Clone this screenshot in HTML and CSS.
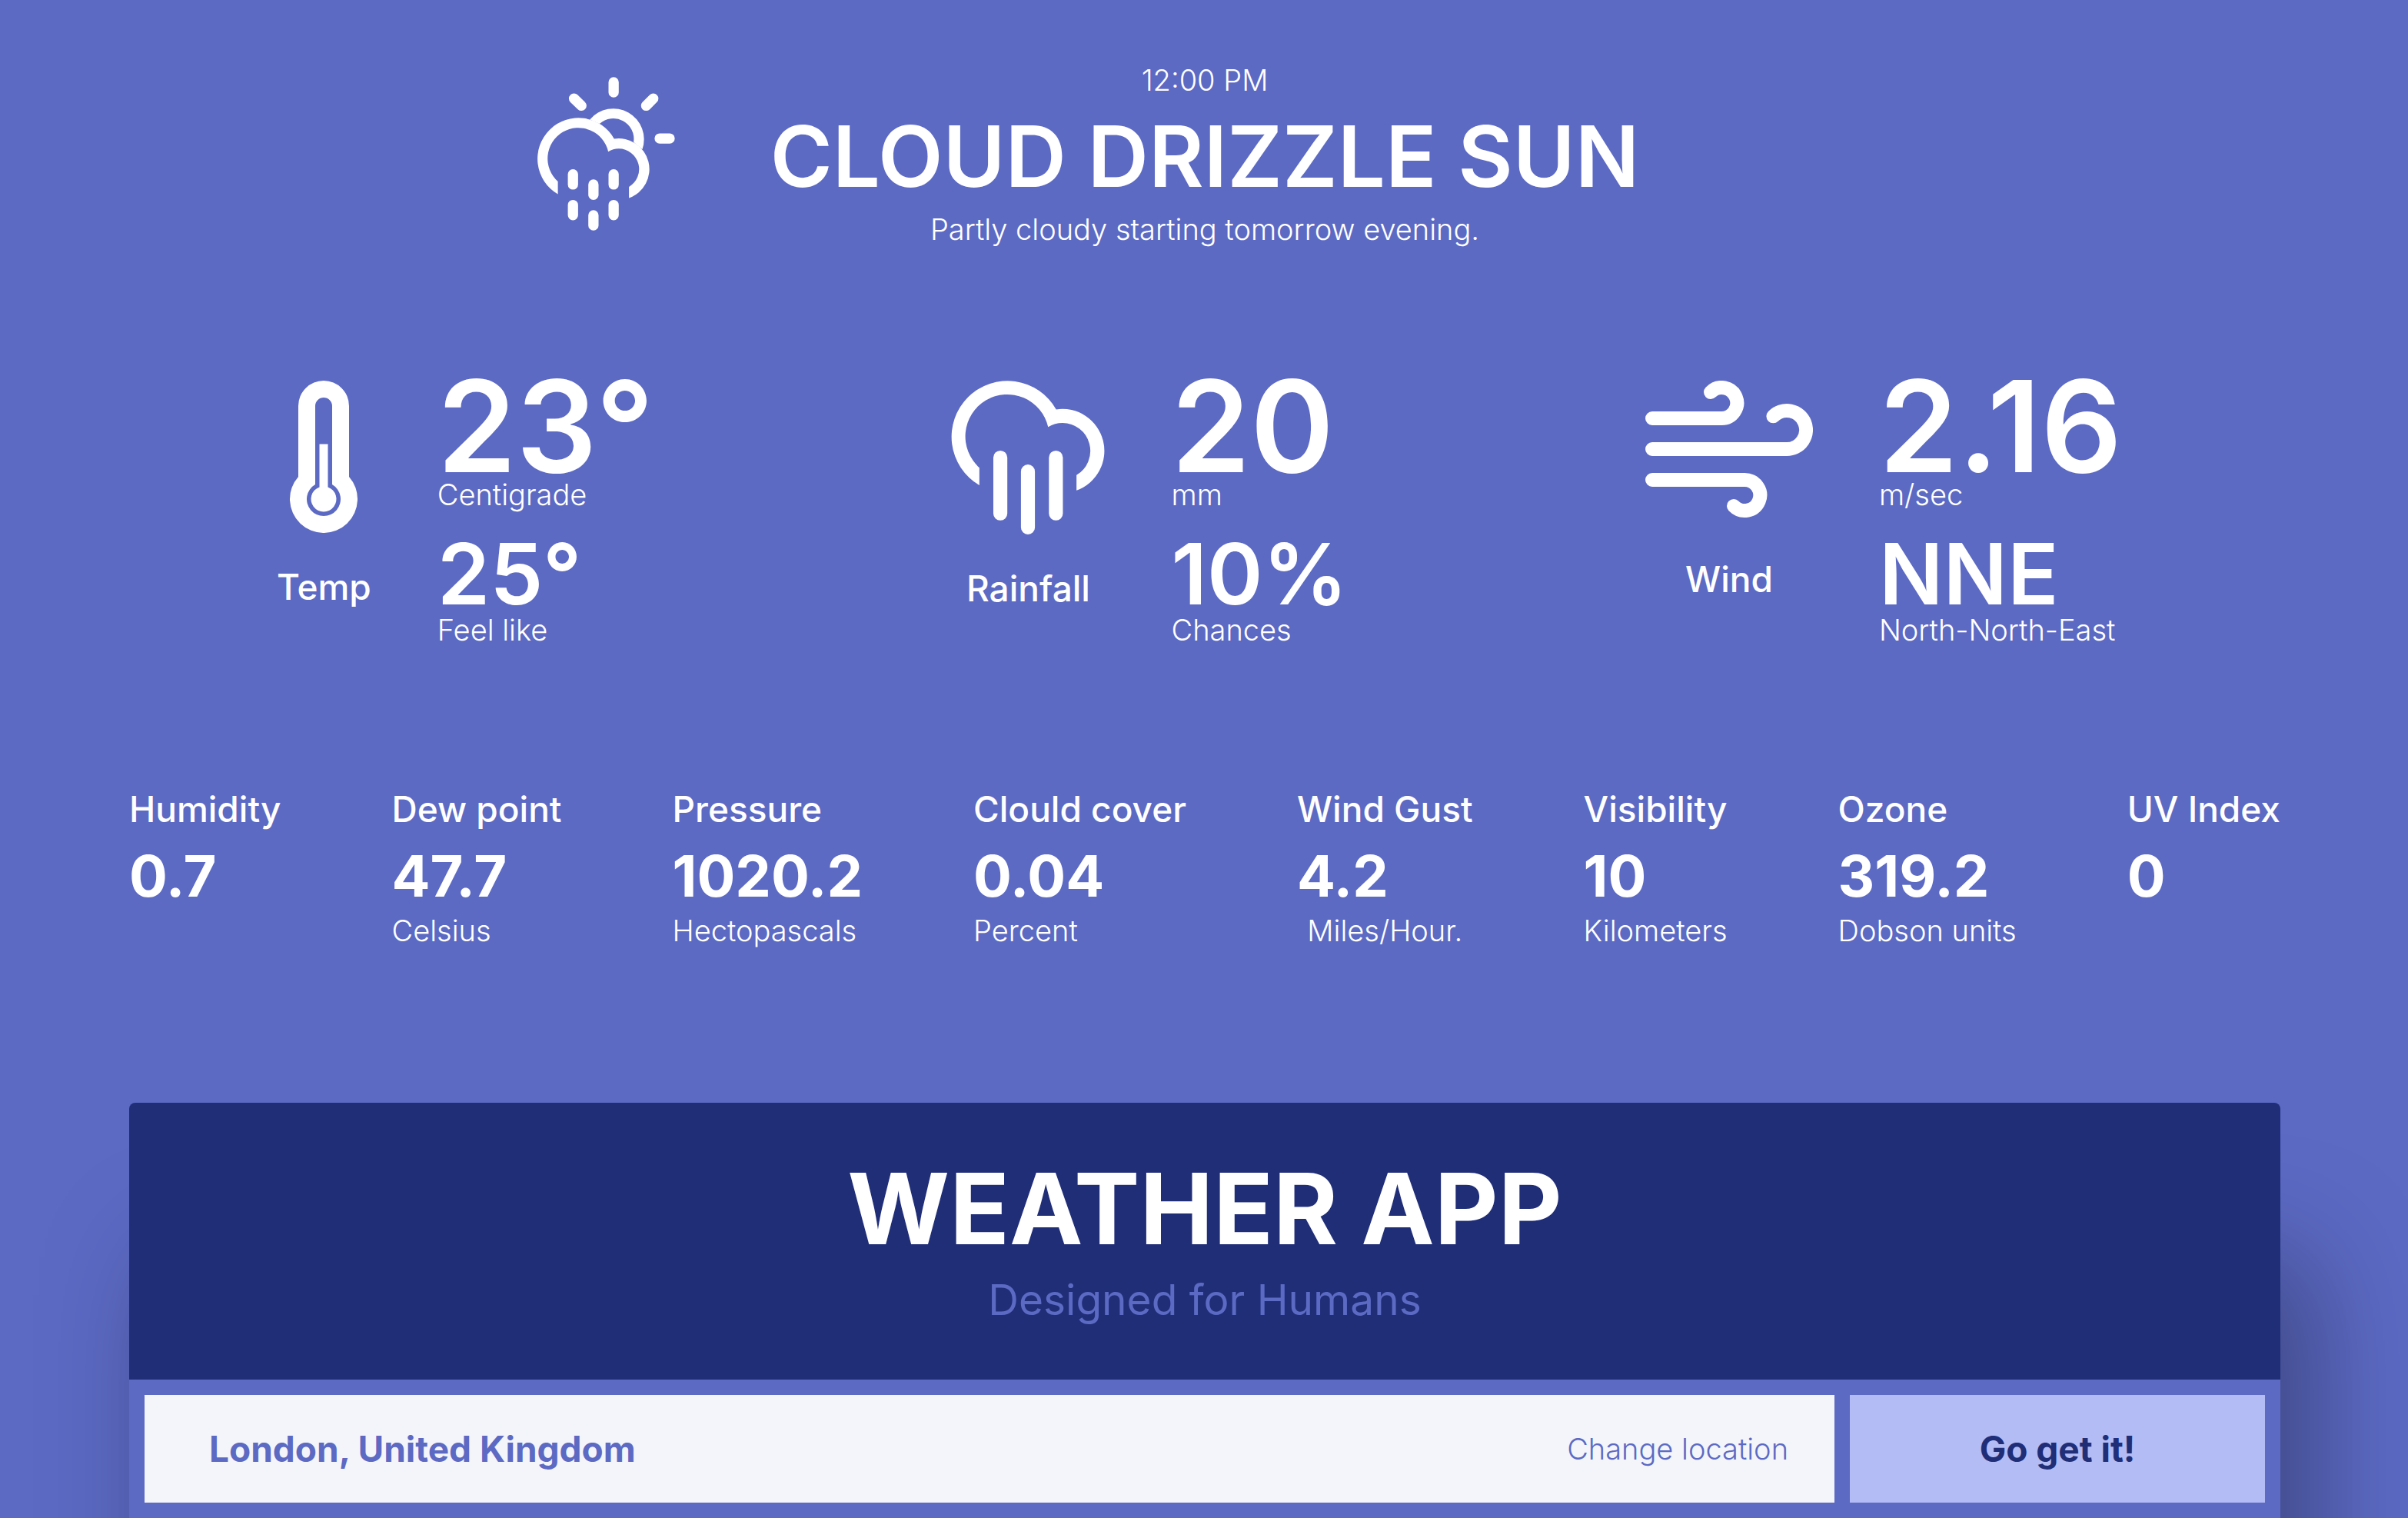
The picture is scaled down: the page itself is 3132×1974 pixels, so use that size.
FILE: index.html
```html
<!DOCTYPE html>
<html lang="en">
<head>
  <meta charset="utf-8">
  <meta name="viewport" content="width=device-width, initial-scale=1">
  <title>Weather App</title>
  <link rel="stylesheet" href="styles.css">
</head>
<body>
  <main class="page">
    <header class="summary">
      <svg class="summary-icon" viewBox="114 90 538 600" aria-hidden="true">
        <path class="shape" d="M319 256A120 120 0 0 1 524 373L490 344A80 80 0 0 0 357 273Z"/>
        <path class="shape" d="M194 548A160 160 0 1 1 413.900 331.300A120 120 0 0 1 472 563V519A80 80 0 0 0 432 370A80 80 0 0 0 390.800 381.400A120 120 0 1 0 194 498Z"/>
        <path class="stroke" d="M412 110V150M257 174L286 202M567 174L539 202M592 330H631"/>
        <path class="stroke" d="M253 470V510M253 590V630M333 510V550M333 630V670M412 470V510M412 590V630"/>
      </svg>
      <div class="summary-text">
        <p class="text-small">12:00 PM</p>
        <h1 class="summary-title">CLOUD DRIZZLE SUN</h1>
        <p class="text-small">Partly cloudy starting tomorrow evening.</p>
      </div>
    </header>

    <section class="metrics" aria-label="Current conditions">
      <article class="metric">
        <div class="metric-kind">
          <svg class="icon-temp" viewBox="-8 -28 16 36" aria-hidden="true">
            <path class="shape" fill-rule="evenodd" d="M-6 -5.290V-22A6 6 0 0 1 6 -22V-5.290A8 8 0 1 1 -6 -5.290ZM-2 -3.460A4 4 0 1 0 2 -3.460V-22A2 2 0 0 0 -2 -22Z"/>
            <path class="shape" d="M-1 -13H1V-2.830A3 3 0 1 1 -1 -2.830Z"/>
          </svg>
          <h2 class="label">Temp</h2>
        </div>
        <div>
          <p class="metric-main">23°</p>
          <p class="text-unit">Centigrade</p>
          <p class="metric-second">25°</p>
          <p class="text-unit">Feel like</p>
        </div>
      </article>
      <article class="metric">
        <div class="metric-kind">
          <svg class="icon-rain" viewBox="114 249 438 440" aria-hidden="true">
            <path class="shape" d="M194 548A160 160 0 1 1 413.900 331.300A120 120 0 0 1 472 563V519A80 80 0 0 0 432 370A80 80 0 0 0 390.800 381.400A120 120 0 1 0 194 498Z"/>
            <path class="stroke" d="M254 469V629M333 509V669M413 469V629"/>
          </svg>
          <h2 class="label">Rainfall</h2>
        </div>
        <div>
          <p class="metric-main">20</p>
          <p class="text-unit">mm</p>
          <p class="metric-second">10%</p>
          <p class="text-unit">Chances</p>
        </div>
      </article>
      <article class="metric">
        <div class="metric-kind">
          <svg class="icon-wind" viewBox="39 35 218 188" aria-hidden="true">
            <path class="gust" d="M48 84H138A20 20 0 1 0 124 50M48 124H223A25 25 0 1 0 205.400 81.300M48 164H168A20 20 0 1 1 154 198"/>
          </svg>
          <h2 class="label">Wind</h2>
        </div>
        <div>
          <p class="metric-main">2.16</p>
          <p class="text-unit">m/sec</p>
          <p class="metric-second">NNE</p>
          <p class="text-unit">North-North-East</p>
        </div>
      </article>
    </section>

    <section class="stats" aria-label="Details">
      <div><h2 class="label">Humidity</h2><p class="stat-value">0.7</p></div>
      <div><h2 class="label">Dew point</h2><p class="stat-value">47.7</p><p class="text-unit">Celsius</p></div>
      <div><h2 class="label">Pressure</h2><p class="stat-value">1020.2</p><p class="text-unit">Hectopascals</p></div>
      <div><h2 class="label">Clould cover</h2><p class="stat-value">0.04</p><p class="text-unit">Percent</p></div>
      <div><h2 class="label">Wind Gust</h2><p class="stat-value">4.2</p><p class="text-unit text-centered">Miles/Hour.</p></div>
      <div><h2 class="label">Visibility</h2><p class="stat-value">10</p><p class="text-unit">Kilometers</p></div>
      <div><h2 class="label">Ozone</h2><p class="stat-value">319.2</p><p class="text-unit">Dobson units</p></div>
      <div><h2 class="label">UV Index</h2><p class="stat-value">0</p></div>
    </section>

    <section class="card">
      <div class="card-head">
        <h2 class="card-title">WEATHER APP</h2>
        <p class="card-subtitle">Designed for Humans</p>
      </div>
      <form class="search">
        <div class="field">
          <input class="field-input" type="text" aria-label="Location" value="London, United Kingdom">
          <a class="field-link" href="#">Change location</a>
        </div>
        <button class="submit" type="button">Go get it!</button>
      </form>
    </section>
  </main>
</body>
</html>
```
FILE: styles.css
```css
* {
  box-sizing: border-box;
}

body {
  margin: 0;
  background: #5c6ac4;
  color: #fff;
  font-family: Inter, "Liberation Sans", sans-serif;
}

h1,
h2,
p {
  margin: 0;
}

svg {
  display: block;
  flex: none;
}

.shape {
  fill: #fff;
}

.stroke,
.gust {
  fill: none;
  stroke: #fff;
  stroke-width: 40;
  stroke-linecap: round;
}

.gust {
  stroke-width: 18;
}

.page {
  padding: 82px 166px 0 168px;
}

/* Shared text styles */
.text-small,
.text-unit {
  font-size: 38px;
  line-height: 44px;
  font-weight: 300;
}

.text-centered {
  text-align: center;
}

.label {
  font-size: 46px;
  line-height: 52px;
  font-weight: 500;
}

/* Forecast summary */
.summary {
  display: grid;
  grid-template-columns: 1fr auto 1fr;
  column-gap: 124px;
}

.summary-icon {
  width: 179px;
  height: 200px;
  margin-top: 18px;
  justify-self: end;
}

.summary-text {
  text-align: center;
}

.summary-title {
  margin: 14px 0 10px;
  font-size: 110px;
  line-height: 126px;
  font-weight: 600;
}

/* Main metrics */
.metrics {
  display: flex;
  justify-content: space-between;
  margin-top: 167px;
  padding: 0 206px 0 192px;
}

.metric {
  display: flex;
  gap: 86px;
}

.metric-kind {
  display: flex;
  flex-direction: column;
  align-items: center;
  gap: 44px;
  padding-top: 8px;
}

.icon-temp {
  width: 88px;
  height: 198px;
}

.icon-rain {
  width: 200px;
  height: 200px;
}

.icon-wind {
  width: 218px;
  height: 188px;
}

.metric-main {
  font-size: 165px;
  line-height: 134px;
  font-weight: 600;
}

.metric-second {
  margin-top: 30px;
  font-size: 110px;
  line-height: 102px;
  font-weight: 600;
}

/* Detail row */
.stats {
  display: flex;
  justify-content: space-between;
  margin-top: 185px;
}

.stat-value {
  margin-top: 12px;
  font-size: 74px;
  line-height: 98px;
  font-weight: 700;
}

/* Location card */
.card {
  margin-top: 202px;
  border-radius: 8px 8px 0 0;
  background: #5c6ac4;
  box-shadow: 40px 200px 150px rgba(0, 0, 0, 0.34);
}

.card-head {
  padding: 58px 0 72px;
  border-radius: 8px 8px 0 0;
  background: #202e78;
  text-align: center;
}

.card-title {
  font-size: 128px;
  line-height: 160px;
  font-weight: 700;
}

.card-subtitle {
  margin-top: 6px;
  color: #5c6ac4;
  font-size: 55px;
  line-height: 64px;
  font-weight: 400;
}

.search {
  display: flex;
  gap: 20px;
  padding: 20px;
}

.field {
  display: flex;
  flex: 1;
  align-items: center;
  padding: 0 60px 0 84px;
  background: #f4f5fa;
}

.field-input {
  flex: 1;
  min-width: 0;
  height: 140px;
  padding: 0;
  border: 0;
  outline: 0;
  background: none;
  color: #5c6ac4;
  font: 700 46px/52px Inter, "Liberation Sans", sans-serif;
}

.field-link {
  color: #5c6ac4;
  font-size: 38px;
  line-height: 44px;
  font-weight: 300;
  text-decoration: none;
}

.submit {
  width: 540px;
  padding: 0;
  border: 0;
  background: #b3bcf5;
  color: #202e78;
  font: 700 46px/52px Inter, "Liberation Sans", sans-serif;
}
```
